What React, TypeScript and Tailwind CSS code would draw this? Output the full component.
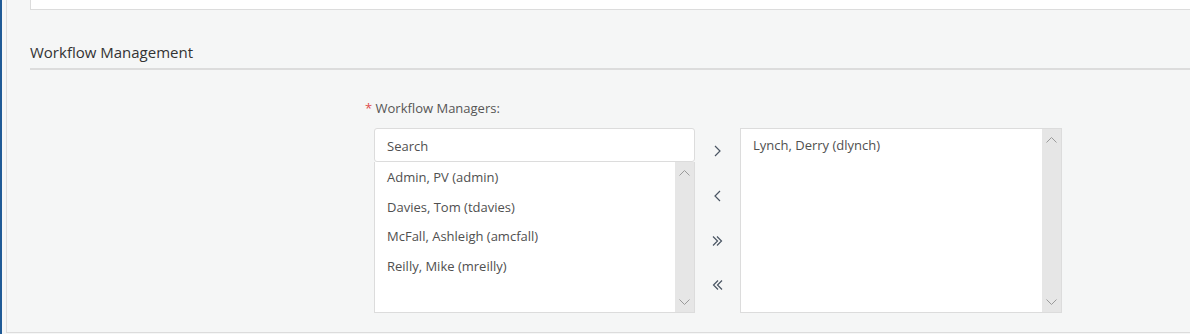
import React from 'react';

const available = [
  'Admin, PV (admin)',
  'Davies, Tom (tdavies)',
  'McFall, Ashleigh (amcfall)',
  'Reilly, Mike (mreilly)',
];

const selected = ['Lynch, Derry (dlynch)'];

const font = { fontFamily: '"Open Sans", "Noto Sans", sans-serif' };

const Chevron = ({ dir }: { dir: 'up' | 'down' }) => (
  <svg width="11" height="6" viewBox="0 0 11 6" fill="none">
    <polyline
      points={dir === 'up' ? '0.5,5.5 5.5,0.5 10.5,5.5' : '0.5,0.5 5.5,5.5 10.5,0.5'}
      stroke="#9a9a9a"
      strokeWidth="1"
    />
  </svg>
);

const Scrollbar = () => (
  <div className="flex w-[19px] flex-col items-center justify-between bg-[#e6e6e6] pb-[7px] pt-[8px]">
    <Chevron dir="up" />
    <Chevron dir="down" />
  </div>
);

const MoveIcon = ({ kind }: { kind: 'right' | 'left' | 'allRight' | 'allLeft' }) => {
  const paths: Record<string, string> = {
    right: 'M4 1 L9 6 L4 11',
    left: 'M9 1 L4 6 L9 11',
    allRight: 'M2 1.5 L6.5 6 L2 10.5 M6 1.5 L10.5 6 L6 10.5',
    allLeft: 'M11 1.5 L6.5 6 L11 10.5 M7 1.5 L2.5 6 L7 10.5',
  };
  return (
    <button className="flex h-[44.7px] w-full items-center justify-center">
      <svg width="13" height="12" viewBox="0 0 13 12" fill="none">
        <path d={paths[kind]} stroke="#4a5563" strokeWidth="1.2" />
      </svg>
    </button>
  );
};

const ItemList = ({ items }: { items: string[] }) => (
  <ul className="pt-px">
    {items.map((item) => (
      <li key={item} className="flex h-[29.5px] items-center pl-3 text-[13px] text-[#505050]">
        {item}
      </li>
    ))}
  </ul>
);

export default function App() {
  return (
    <div className="flex h-[334px] w-[1190px] overflow-hidden bg-[#f5f6f6]" style={font}>
      <div className="w-[2px] shrink-0 bg-[#1f5a96]" />
      <div className="w-[4px] shrink-0" />
      <div className="h-[333px] flex-1 border-b border-l border-[#dcdcdc] pl-[23px]">
        <div className="h-[10px] border-b border-l border-[#dcdcdc] bg-white" />

        <div className="mt-[32px] border-b-2 border-[#dcdcdc] pb-[6px]">
          <h2 className="text-[15px] leading-[20px] text-[#333]">Workflow Management</h2>
        </div>

        <div className="ml-[335px] mt-[29px]">
          <label className="block text-[13px] leading-[18px] text-[#555]">
            <span className="text-[#e04c4c]">*</span> Workflow Managers:
          </label>

          <div className="ml-[9px] mt-[11px] flex">
            <div className="w-[321px]">
              <input
                placeholder="Search"
                className="h-[34px] w-full rounded-[3px] border border-[#dcdcdc] bg-white pl-3 pt-px text-[13px] text-[#505050] outline-none placeholder:text-[#505050]"
              />
              <div className="flex h-[151px] border border-t-0 border-[#dcdcdc] bg-white">
                <div className="flex-1">
                  <ItemList items={available} />
                </div>
                <Scrollbar />
              </div>
            </div>

            <div className="flex w-[45px] flex-col pt-[1px]">
              <MoveIcon kind="right" />
              <MoveIcon kind="left" />
              <MoveIcon kind="allRight" />
              <MoveIcon kind="allLeft" />
            </div>

            <div className="flex h-[185px] w-[322px] border border-[#dcdcdc] bg-white">
              <div className="flex-1 pt-px">
                <ItemList items={selected} />
              </div>
              <Scrollbar />
            </div>
          </div>
        </div>
      </div>
    </div>
  );
}
